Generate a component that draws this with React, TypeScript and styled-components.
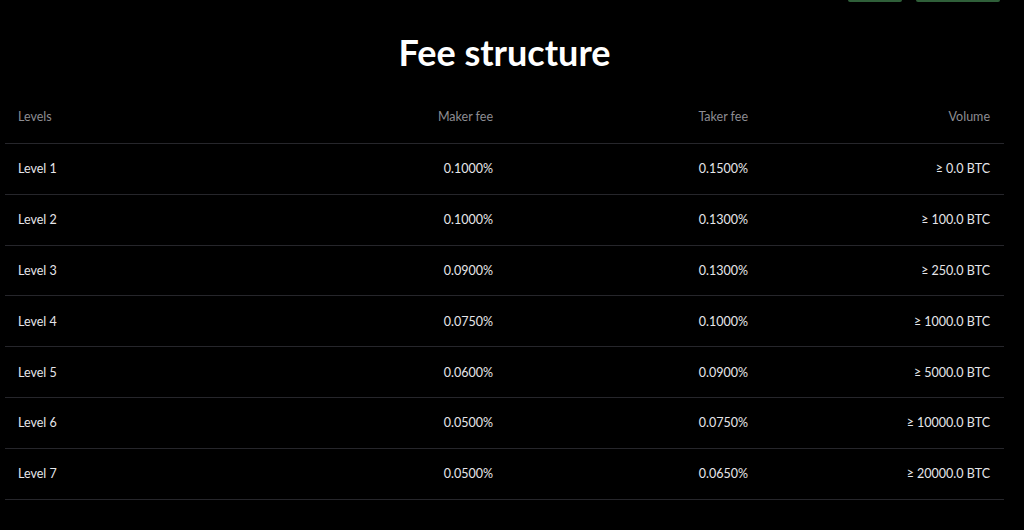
import React from "react";
import styled, { createGlobalStyle } from "styled-components";

const Global = createGlobalStyle`
  html, body { margin: 0; padding: 0; background: #000; }
  body { font-family: Lato, "Noto Sans", sans-serif; color: #e8e8ea; }
`;

const Page = styled.div`
  background: #000;
  min-height: 530px;
  padding: 0 20px 0 5px;
`;

const TopBar = styled.div`
  display: flex;
  justify-content: flex-end;
  gap: 14px;
  height: 2px;
  padding-right: 4px;
`;

const ButtonEdge = styled.div<{ $w: number }>`
  width: ${(p) => p.$w}px;
  height: 2px;
  background: #2f5f39;
  border-radius: 0 0 3px 3px;
`;

const Title = styled.h1`
  margin: 28px 0 0;
  text-align: center;
  font-family: Lato, sans-serif;
  font-weight: 700;
  font-size: 36px;
  line-height: 44px;
  color: #fff;
`;

const Table = styled.div`
  margin-top: 16px;
  display: grid;
  grid-template-columns: 250px 252px 255px 242px;
`;

const Row = styled.div<{ $head?: boolean }>`
  display: contents;
  & > div {
    height: ${(p) => (p.$head ? "54px" : "50.8px")};
    color: ${(p) => (p.$head ? "#8d8d92" : "#e6e6ea")};
    border-bottom: 1px solid #26262b;
  }
`;

const Cell = styled.div<{ $align?: "left" | "right" }>`
  box-sizing: border-box;
  display: flex;
  align-items: center;
  justify-content: ${(p) => (p.$align === "left" ? "flex-start" : "flex-end")};
  padding: 0 14px 0 13px;
  font-size: 12.5px;
`;

const data = [
  ["Level 1", "0.1000%", "0.1500%", "≥ 0.0 BTC"],
  ["Level 2", "0.1000%", "0.1300%", "≥ 100.0 BTC"],
  ["Level 3", "0.0900%", "0.1300%", "≥ 250.0 BTC"],
  ["Level 4", "0.0750%", "0.1000%", "≥ 1000.0 BTC"],
  ["Level 5", "0.0600%", "0.0900%", "≥ 5000.0 BTC"],
  ["Level 6", "0.0500%", "0.0750%", "≥ 10000.0 BTC"],
  ["Level 7", "0.0500%", "0.0650%", "≥ 20000.0 BTC"],
];

export default function App() {
  return (
    <Page>
      <Global />
      <TopBar>
        <ButtonEdge $w={54} />
        <ButtonEdge $w={84} />
      </TopBar>
      <Title>Fee structure</Title>
      <Table>
        <Row $head>
          <Cell $align="left">Levels</Cell>
          <Cell>Maker fee</Cell>
          <Cell>Taker fee</Cell>
          <Cell>Volume</Cell>
        </Row>
        {data.map((r) => (
          <Row key={r[0]}>
            <Cell $align="left">{r[0]}</Cell>
            <Cell>{r[1]}</Cell>
            <Cell>{r[2]}</Cell>
            <Cell>{r[3]}</Cell>
          </Row>
        ))}
      </Table>
    </Page>
  );
}
